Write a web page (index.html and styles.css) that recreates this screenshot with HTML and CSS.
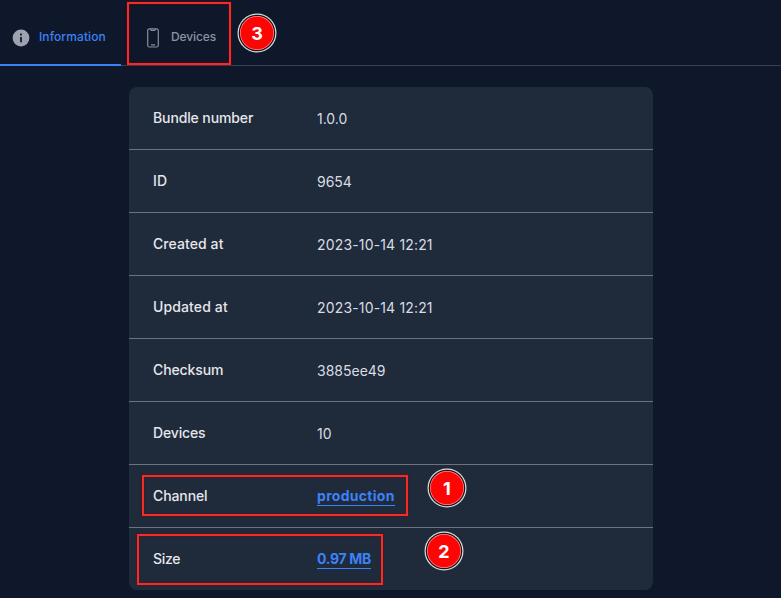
FILE: index.html
```html
<!DOCTYPE html>
<html lang="en">
<head>
<meta charset="utf-8">
<title>Bundle information</title>
<link rel="stylesheet" href="styles.css">
</head>
<body>
<nav class="tabs">
  <a class="tab tab-active">
    <svg class="info-icon" viewBox="0 0 18 18"><circle cx="9" cy="9" r="8.4" fill="#9ca3af"/><path d="M8 4.5h2v2H8zM8 8h2v5.3H8z" fill="#1e2638"/></svg>
    <span class="label t-information">Information</span>
  </a>
  <a class="tab tab-devices">
    <svg class="phone-icon" viewBox="0 0 12 20"><rect x=".7" y=".8" width="10.6" height="18.2" rx="1.8"/><path d="M3.5 1l.7 1.3h3.6L8.5 1M4 16.8h4"/></svg>
    <span class="label t-tab-devices">Devices</span>
    <span class="frame frame-devices"></span>
    <span class="badge badge-3">3</span>
  </a>
</nav>
<dl class="card">
  <div class="row"><dt class="l-bundle">Bundle number</dt><dd>1.0.0</dd></div>
  <div class="row"><dt class="l-id">ID</dt><dd>9654</dd></div>
  <div class="row"><dt class="l-created">Created at</dt><dd class="date">2023-10-14 12:21</dd></div>
  <div class="row"><dt class="l-updated">Updated at</dt><dd class="date">2023-10-14 12:21</dd></div>
  <div class="row"><dt class="l-checksum">Checksum</dt><dd>3885ee49</dd></div>
  <div class="row"><dt class="l-devices">Devices</dt><dd>10</dd></div>
  <div class="row"><dt class="l-channel">Channel</dt><dd class="linked"><a class="link-channel">production</a></dd><span class="frame frame-channel"></span><span class="badge badge-1">1</span></div>
  <div class="row"><dt class="l-size">Size</dt><dd class="linked"><a class="link-size">0.97 MB</a></dd><span class="frame frame-size"></span><span class="badge badge-2">2</span></div>
</dl>
</body>
</html>
```
FILE: styles.css
```css
* { box-sizing: border-box; }
body {
  margin: 0;
  height: 598px;
  overflow: hidden;
  background: #0f172a;
  font-family: Inter, "Open Sans", sans-serif;
}
.tabs {
  display: flex;
  height: 66px;
  border-bottom: 1px solid #374151;
}
.tab {
  position: relative;
  display: flex;
  align-items: center;
  height: 66px;
  padding-top: 8px;
  font-size: 12px;
  font-weight: 500;
  line-height: 18px;
  color: #8b93a3;
}
.label { margin-top: -1px; }
.tab .t-information { margin-top: 1px; letter-spacing: .1px; }
.t-tab-devices { letter-spacing: -.1px; }
.tab-active {
  width: 121px;
  padding-left: 12px;
  border-bottom: 2px solid #3b82f6;
  color: #3b82f6;
}
.info-icon { width: 18px; height: 18px; margin: 3px 9px 0 0; }
.tab-devices { width: 110px; padding-left: 26px; }
.phone-icon {
  width: 12px;
  height: 20px;
  margin: 2px 12px 0 0;
  fill: none;
  stroke: #858d9d;
  stroke-width: 1.2;
}
.card {
  width: 524px;
  height: 503px;
  margin: 21px 0 0 129px;
  border-radius: 8px;
  background: #1f2a3b;
}
.row {
  position: relative;
  display: grid;
  grid-template-columns: 164px 1fr;
  align-items: center;
  height: 63px;
  padding: 0 24px;
  border-bottom: 1px solid #6b7280;
}
.row:last-child { height: 62px; border-bottom: 0; }
dt {
  font-size: 14px;
  font-weight: 500;
  line-height: 20px;
  color: #e5e7eb;
}
dd {
  margin: 2px 0 0;
  font-size: 14px;
  line-height: 20px;
  color: #d9dde3;
}
dt, dd, .tab { white-space: nowrap; }
.l-bundle { letter-spacing: -.12px; }
.l-id { letter-spacing: .3px; }
.l-created { letter-spacing: .08px; }
.l-updated { letter-spacing: .12px; }
.l-checksum { letter-spacing: -.12px; }
.l-devices { letter-spacing: -.15px; }
.l-channel { letter-spacing: -.1px; }
.l-size { letter-spacing: -.3px; }
.date { letter-spacing: .16px; }
.linked { margin-top: 0; font-weight: 700; color: #3b82f6; }
.linked a {
  display: inline-block;
  height: 20px;
  border-bottom: 1px solid #3b82f6;
}
.link-channel { letter-spacing: .3px; }
.link-size { letter-spacing: -.3px; }
.frame {
  position: absolute;
  border: 2px solid #f52b24;
  box-shadow: 0 0 2px #650b18, inset 0 0 2px #650b18;
}
.frame-devices { left: 6px; top: 2px; width: 104px; height: 63px; }
.frame-channel { left: 13px; top: 10px; width: 266px; height: 41px; }
.frame-size { left: 8px; top: 6px; width: 246px; height: 51px; }
.badge {
  position: absolute;
  display: grid;
  place-items: center;
  width: 34px;
  height: 34px;
  border-radius: 50%;
  background: #fe0505;
  box-shadow: inset 0 0 0 .7px #ff8b85, 0 0 0 1.3px #111827, 0 0 0 2.5px #e1dedb;
  font-size: 18px;
  font-weight: 700;
  line-height: 20px;
  color: #fff;
}
.badge-3 { left: 119px; top: 16px; padding-top: 1px; }
.badge-1 { left: 301px; top: 6px; padding-top: 1px; }
.badge-2 { left: 298px; top: 6px; padding-top: 1px; }
```
